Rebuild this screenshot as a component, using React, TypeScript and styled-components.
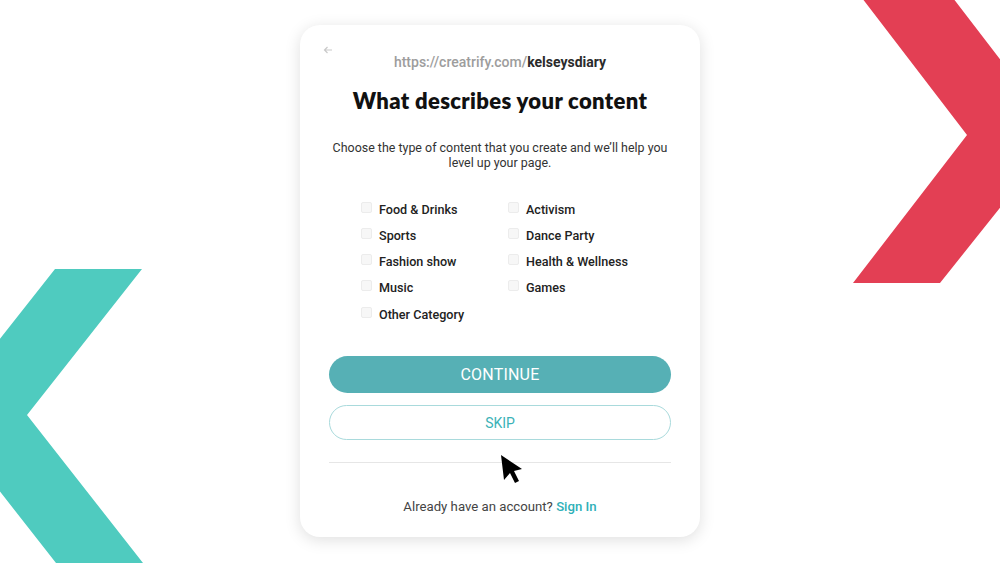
import React, { useState } from 'react'
import styled, { createGlobalStyle } from 'styled-components'

const GlobalStyle = createGlobalStyle`
  html, body {
    margin: 0;
    padding: 0;
    background: #ffffff;
    font-family: Roboto, 'Liberation Sans', Arial, sans-serif;
  }
  * {
    box-sizing: border-box;
  }
`

const Page = styled.div`
  position: relative;
  width: 1000px;
  height: 563px;
  overflow: hidden;
  display: flex;
  justify-content: center;
  padding-top: 25px;
`

const Backdrop = styled.svg`
  position: absolute;
  inset: 0;
  width: 100%;
  height: 100%;
  pointer-events: none;
`

const Card = styled.div`
  position: relative;
  width: 400px;
  height: 512px;
  background: #ffffff;
  border-radius: 20px;
  box-shadow: 0 3px 16px rgba(0, 0, 0, 0.13);
  padding: 28px 29px 0;
  display: flex;
  flex-direction: column;
`

const Header = styled.div`
  position: relative;
  display: flex;
  justify-content: center;
`

const BackButton = styled.button`
  position: absolute;
  left: -7px;
  top: -9px;
  width: 12px;
  height: 12px;
  padding: 0;
  border: none;
  background: none;
  display: flex;
  align-items: center;
  justify-content: center;
  cursor: pointer;
`

const Url = styled.div`
  font-size: 14px;
  line-height: 18px;
  font-weight: 500;
  color: #9d9d9d;
  & b {
    font-weight: 700;
    color: #2b2b2b;
  }
`

const Title = styled.h1`
  margin: 16px 0 0;
  text-align: center;
  font-family: Lato, 'DejaVu Sans', sans-serif;
  font-size: 22px;
  line-height: 28px;
  font-weight: 800;
  letter-spacing: 0.35px;
  color: #111111;
`

const Lead = styled.p`
  margin: 25px 0 0;
  text-align: center;
  font-size: 12.45px;
  line-height: 15px;
  color: #333333;
`

const Options = styled.div`
  margin: 26px 0 0 32px;
  display: grid;
  grid-template-columns: 147px auto;
  grid-auto-rows: 26.25px;
`

const Option = styled.label`
  display: flex;
  align-items: center;
  gap: 7px;
  font-size: 12.6px;
  font-weight: 500;
  color: #222222;
  cursor: pointer;
`

const Box = styled.span<{ checked: boolean }>`
  width: 11px;
  height: 11px;
  margin-top: -4px;
  border-radius: 2px;
  border: 1px solid #ececec;
  background: ${({ checked }) => (checked ? '#55b1b6' : '#f7f7f7')};
`

const PrimaryButton = styled.button`
  margin-top: 29px;
  height: 37px;
  border: none;
  border-radius: 19px;
  background: #56b0b5;
  color: #ffffff;
  font-family: Roboto, 'Liberation Sans', sans-serif;
  font-size: 16px;
  letter-spacing: 0.2px;
  cursor: pointer;
`

const GhostButton = styled.button`
  margin-top: 12px;
  height: 35px;
  border: 1px solid #a9dadc;
  border-radius: 18px;
  background: #ffffff;
  color: #3bb2b7;
  font-family: Roboto, 'Liberation Sans', sans-serif;
  font-size: 14px;
  cursor: pointer;
`

const Divider = styled.hr`
  margin: 22px 0 0;
  border: none;
  border-top: 1px solid #e6e6e6;
`

const Footer = styled.div`
  margin-top: 35px;
  text-align: center;
  font-size: 13.2px;
  line-height: 18px;
  color: #444444;
  & a {
    color: #2fb0b8;
    font-weight: 500;
    text-decoration: none;
  }
`

const Pointer = styled.svg`
  position: absolute;
  left: 201px;
  top: 430px;
`

const categories = [
  ['Food & Drinks', 'Activism'],
  ['Sports', 'Dance Party'],
  ['Fashion show', 'Health & Wellness'],
  ['Music', 'Games'],
  ['Other Category'],
]

export default function App() {
  const [picked, setPicked] = useState<string[]>([])

  const toggle = (name: string) =>
    setPicked((list) => (list.includes(name) ? list.filter((n) => n !== name) : [...list, name]))

  return (
    <>
      <GlobalStyle />
      <Page>
        <Backdrop viewBox="0 0 1000 563">
          <polygon points="55,269 142,269 27,415 143,563 56,563 -60,415" fill="#4fcbbf" />
          <polygon points="862,-2 953,-2 1058,135 940,283 853,283 967,135" fill="#e33f54" />
        </Backdrop>
        <Card>
          <Header>
            <BackButton aria-label="Back">
              <svg width="10" height="10" viewBox="0 0 10 10">
                <path d="M9 5H1.5M4.5 2 1.5 5l3 3" fill="none" stroke="#c9c9c9" strokeWidth="1.2" />
              </svg>
            </BackButton>
            <Url>
              https://creatrify.com/<b>kelseysdiary</b>
            </Url>
          </Header>
          <Title>What describes your content</Title>
          <Lead>
            Choose the type of content that you create and we’ll help you
            <br />
            level up your page.
          </Lead>
          <Options>
            {categories.flat().map((name) => (
              <Option key={name} onClick={() => toggle(name)}>
                <Box checked={picked.includes(name)} />
                {name}
              </Option>
            ))}
          </Options>
          <PrimaryButton>CONTINUE</PrimaryButton>
          <GhostButton>SKIP</GhostButton>
          <Divider />
          <Footer>
            Already have an account? <a href="#">Sign In</a>
          </Footer>
          <Pointer width="24" height="32" viewBox="0 0 24 32">
            <path d="M0 0 L21 14 L13 16 L18 26 L14 28 L9 18 L3 25 Z" fill="#000" />
          </Pointer>
        </Card>
      </Page>
    </>
  )
}
